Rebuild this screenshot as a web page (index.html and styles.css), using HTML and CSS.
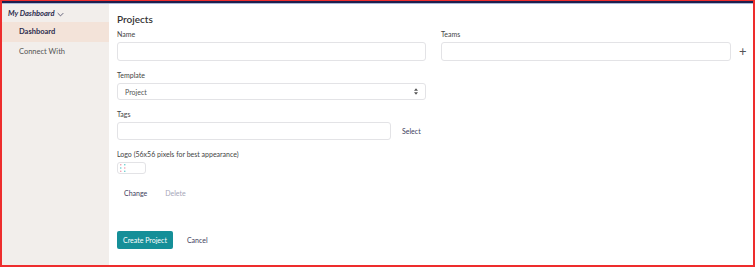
FILE: index.html
```html
<!DOCTYPE html>
<html lang="en">
<head>
  <meta charset="UTF-8" />
  <link rel="stylesheet" href="styles.css">
  <title>Projects</title>
</head>
<body>
  <div class="frame">
    <div class="topline"></div>
    <div class="layout">
      <aside class="sidebar">
        <div class="brand">My Dashboard
          <svg class="chev" viewBox="0 0 10 6" width="7" height="5"><path d="M1 1l4 4 4-4" fill="none" stroke="#4a4a66" stroke-width="1.2"/></svg>
        </div>
        <div class="nav-item active">Dashboard</div>
        <div class="nav-item">Connect With</div>
      </aside>

      <main class="content">
        <h1 class="title">Projects</h1>

        <div class="row">
          <div class="group name-col">
            <label class="label">Name</label>
            <div class="input tall"></div>
          </div>
          <div class="group teams-col">
            <label class="label">Teams</label>
            <div class="input tall"></div>
          </div>
          <div class="plus">+</div>
        </div>

        <div class="group name-col">
          <label class="label">Template</label>
          <div class="input select">
            <span>Project</span>
            <svg viewBox="0 0 6 10" width="4" height="7"><path d="M3 0L6 4H0z M3 10L0 6h6z" fill="#555"/></svg>
          </div>
        </div>

        <div class="group">
          <label class="label">Tags</label>
          <div class="tags-row">
            <div class="input tags"></div>
            <span class="link">Select</span>
          </div>
        </div>

        <div class="group">
          <label class="label">Logo (56x56 pixels for best appearance)</label>
          <div class="logo-box">
            <svg viewBox="0 0 10 10" width="8" height="8">
              <circle cx="1" cy="1" r="0.9" fill="#f08aa0"/>
              <circle cx="6" cy="1" r="0.9" fill="#4cc4c8"/>
              <circle cx="1" cy="5" r="0.9" fill="#4cc4c8"/>
              <circle cx="6" cy="5" r="0.9" fill="#f08aa0"/>
              <circle cx="1" cy="9" r="0.9" fill="#f08aa0"/>
              <circle cx="6" cy="9" r="0.9" fill="#4cc4c8"/>
            </svg>
          </div>
        </div>

        <div class="logo-actions">
          <span class="link">Change</span>
          <span class="link muted">Delete</span>
        </div>

        <div class="actions">
          <button class="btn-primary">Create Project</button>
          <span class="link">Cancel</span>
        </div>
      </main>
    </div>
  </div>
</body>
</html>
```

FILE: styles.css
```css
*,
*::after,
*::before {
  box-sizing: border-box;
  font-family: Lato, "Open Sans", sans-serif;
}

body {
  margin: 0;
  background-color: white;
}

.frame {
  width: 755px;
  height: 267px;
  border: 2px solid #ee2d2d;
  border-top-width: 1px;
  box-shadow: 0 1px 0 #f8b4b4;
  display: flex;
  flex-direction: column;
  overflow: hidden;
}

.topline {
  height: 3px;
  background-color: #1e1f4e;
  border-bottom: 1px solid #a9b8d8;
  flex-shrink: 0;
}

.layout {
  display: flex;
  flex-grow: 1;
}

.sidebar {
  width: 107px;
  background-color: #f2eeeb;
  padding-top: 4px;
  flex-shrink: 0;
}

.brand {
  font-size: 7.5px;
  font-weight: bold;
  font-style: italic;
  color: #2b2b4d;
  padding-left: 6px;
  height: 12px;
  line-height: 12px;
  margin-bottom: 2px;
  display: flex;
  align-items: center;
  gap: 3px;
}

.nav-item {
  font-size: 7.5px;
  color: #555;
  padding-left: 17px;
  height: 20px;
  line-height: 20px;
}

.nav-item.active {
  background-color: #f3e3d9;
  color: #2b2b4d;
  font-weight: bold;
}

.content {
  flex-grow: 1;
  padding: 8px 0 0 8px;
}

.title {
  margin: 0 0 3px;
  font-size: 10px;
  font-weight: 600;
  line-height: 14px;
  color: #333;
}

.row {
  display: flex;
  gap: 15px;
}

.group {
  margin-bottom: 9px;
}

.name-col {
  width: 309px;
}

.teams-col {
  width: 290px;
}

.label {
  display: block;
  font-size: 7px;
  line-height: 10px;
  color: #444;
  margin-bottom: 3px;
}

.input {
  height: 18px;
  border: 1px solid #e3e3e6;
  border-radius: 3px;
  background-color: white;
}

.input.tall {
  height: 19px;
}

.plus {
  font-size: 13px;
  color: #555;
  line-height: 13px;
  margin: 16px 0 0 -7px;
}

.select {
  height: 17px;
  display: flex;
  align-items: center;
  justify-content: space-between;
  padding: 0 7px;
  font-size: 7px;
  color: #555;
  margin-bottom: 1px;
}

.tags-row {
  display: flex;
  align-items: center;
  gap: 11px;
}

.tags {
  width: 274px;
}

.link {
  font-size: 7px;
  color: #3d3d5c;
}

.link.muted {
  color: #a6a6b8;
}

.logo-box {
  width: 29px;
  height: 12px;
  border: 1px solid #e3e3e6;
  border-radius: 3px;
  padding: 1px 0 0 2px;
  display: flex;
}

.logo-actions {
  display: flex;
  gap: 18px;
  padding-left: 7px;
  margin-top: 14px;
  line-height: 10px;
}

.actions {
  display: flex;
  align-items: center;
  gap: 14px;
  margin-top: 33px;
}

.btn-primary {
  font-size: 7px;
  color: white;
  background-color: #158f98;
  border: none;
  border-radius: 2px;
  height: 18px;
  padding: 0 6px;
}
```
